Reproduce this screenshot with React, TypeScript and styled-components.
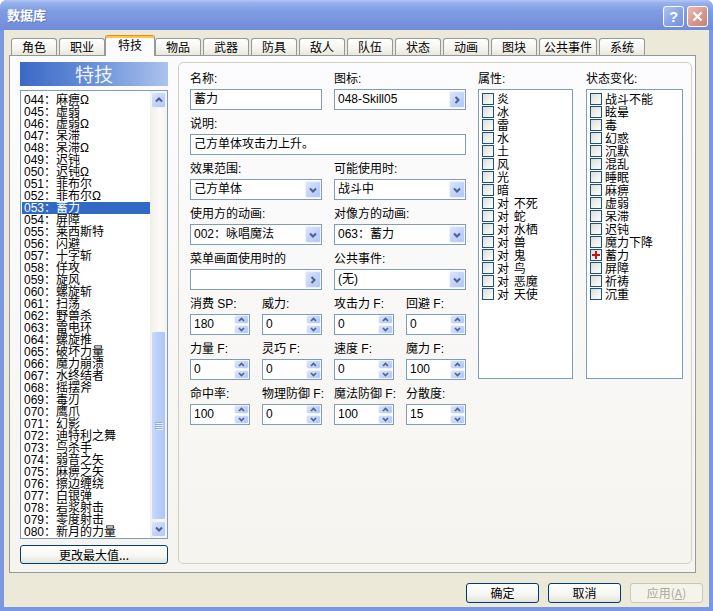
import React from "react";
import styled, { createGlobalStyle, css } from "styled-components";

const UI = `"Liberation Sans", "Noto Sans CJK SC", sans-serif`;
const CJK = `"Noto Sans CJK SC", "Liberation Sans", sans-serif`;

const GlobalStyle = createGlobalStyle`
  html, body { margin: 0; padding: 0; background: #ffffff; }
  body { font-family: ${UI}; font-size: 12px; color: #000; }
  *, *::before, *::after { box-sizing: border-box; }
`;

const Window = styled.div`
  width: 713px;
  height: 611px;
  display: flex;
  flex-direction: column;
  background: #7b97e0;
  border-radius: 7px 7px 0 0;
  overflow: hidden;
`;

const TitleBar = styled.div`
  height: 30px;
  flex: none;
  display: flex;
  align-items: center;
  padding: 0 5px 0 7px;
  background: linear-gradient(180deg, #b2c6f2 0%, #97b0ec 10%, #809ce3 35%, #7894df 70%, #6f8cdb 100%);
`;

const Title = styled.span`
  flex: 1;
  font-family: ${CJK};
  font-size: 13px;
  font-weight: bold;
  color: #ffffff;
  line-height: 30px;
  text-shadow: 1px 1px 0 rgba(40, 60, 140, 0.35);
`;

const TitleButtons = styled.div`
  display: flex;
  gap: 3px;
  margin-top: 2px;
`;

const TitleButton = styled.span<{ $close?: boolean }>`
  width: 21px;
  height: 21px;
  display: flex;
  align-items: center;
  justify-content: center;
  border: 1px solid #ffffff;
  border-radius: 3px;
  color: #ffffff;
  font-family: "Liberation Sans", sans-serif;
  font-weight: bold;
  font-size: 15px;
  background: ${(p) =>
    p.$close
      ? "linear-gradient(135deg, #eabcb2 0%, #d99a8f 50%, #c98074 100%)"
      : "linear-gradient(135deg, #aec4f4 0%, #8aa6ea 50%, #7090e0 100%)"};
`;

const Frame = styled.div`
  flex: 1;
  margin: 0 4px 4px 4px;
  background: #ece9d8;
  display: flex;
  flex-direction: column;
  padding: 5px 0 0 5px;
`;

const TabStrip = styled.div`
  height: 20px;
  display: flex;
  align-items: flex-end;
  gap: 2px;
  padding-left: 2px;
  position: relative;
  z-index: 2;
`;

const Tab = styled.div<{ $active?: boolean; $w: number }>`
  width: ${(p) => p.$w}px;
  height: 17px;
  flex: none;
  border: 1px solid #919b9c;
  border-bottom: none;
  border-radius: 3px 3px 0 0;
  background: linear-gradient(180deg, #ffffff 0%, #f6f5f0 55%, #e9e7dd 100%);
  font-family: ${CJK};
  font-size: 12px;
  line-height: 16px;
  text-align: center;
  white-space: nowrap;
  ${(p) =>
    p.$active &&
    css`
      width: ${p.$w + 4}px;
      height: 21px;
      margin: 0 -2px -1px -2px;
      line-height: 17px;
      border-top-color: #e68b2c;
      background: #fcfcfe;
      box-shadow: inset 0 2px 0 #ffc73c;
    `}
`;

const TabPanel = styled.div`
  width: 687px;
  height: 518px;
  border: 1px solid #919b9c;
  background: linear-gradient(180deg, #fcfcfe 0%, #f5f4ef 100%);
  display: flex;
  gap: 10px;
  padding: 6px 4px 8px 10px;
`;

const LeftColumn = styled.div`
  width: 148px;
  flex: none;
  display: flex;
  flex-direction: column;
`;

const ListHeader = styled.div`
  height: 24px;
  background: linear-gradient(90deg, #3a69c6 0%, #6a90d8 50%, #abc3ee 100%);
  color: #eef3fd;
  font-family: ${CJK};
  font-size: 19px;
  line-height: 24px;
  text-align: center;
`;

const SkillList = styled.div`
  height: 449px;
  margin-top: 4px;
  border: 1px solid #7f9db9;
  background: #ffffff;
  display: flex;
  overflow: hidden;
`;

const SkillRows = styled.div`
  flex: 1;
  padding: 3px 0 0 1px;
  display: flex;
  flex-direction: column;
  overflow: hidden;
`;

const SkillRow = styled.div<{ $selected?: boolean }>`
  height: 12px;
  flex: none;
  line-height: 12px;
  padding-left: 2px;
  white-space: nowrap;
  font-size: 12px;
  ${(p) =>
    p.$selected &&
    css`
      background: #316ac5;
      color: #ffffff;
    `}
`;

const ScrollTrack = styled.div`
  width: 17px;
  flex: none;
  display: flex;
  flex-direction: column;
  background: linear-gradient(90deg, #f1efe7 0%, #fbfbf8 60%, #f3f2ec 100%);
`;

const ScrollButton = styled.div`
  width: 15px;
  height: 16px;
  margin: 1px 1px;
  border: 1px solid #f0f4fd;
  border-radius: 2px;
  background: linear-gradient(135deg, #dbe5fd 0%, #c3d4fb 50%, #b2c7f5 100%);
  display: flex;
  align-items: center;
  justify-content: center;
`;

const ScrollSpace = styled.div`
  flex: 1;
`;

const ScrollThumb = styled.div`
  height: 189px;
  margin: 0 1px;
  border: 1px solid #f0f4fd;
  border-radius: 2px;
  background: linear-gradient(90deg, #c9d8fc 0%, #bacefa 50%, #b0c5f6 100%);
  display: flex;
  flex-direction: column;
  align-items: center;
  justify-content: center;
  gap: 1px;
`;

const Grip = styled.span`
  width: 7px;
  height: 1px;
  background: #8aa8ee;
  box-shadow: 1px 1px 0 #eef3fe;
`;

const PushButton = styled.div<{ $disabled?: boolean; $w?: number }>`
  height: ${(p) => (p.$w ? 20 : 19)}px;
  width: ${(p) => (p.$w ? `${p.$w}px` : "auto")};
  border: 1px solid ${(p) => (p.$disabled ? "#c9c7ba" : "#003c74")};
  border-radius: 3px;
  background: ${(p) =>
    p.$disabled ? "#f5f4ea" : "linear-gradient(180deg, #ffffff 0%, #f6f6f2 60%, #e3e2da 100%)"};
  color: ${(p) => (p.$disabled ? "#aca899" : "#000000")};
  font-family: ${CJK};
  font-size: 12px;
  line-height: 17px;
  text-align: center;
  white-space: nowrap;
`;

const MaxButton = styled(PushButton)`
  margin-top: 6px;
`;

const EditPanel = styled.div`
  flex: 1;
  border: 1px solid #d0d0bf;
  border-radius: 5px;
  padding: 6px 8px 0 11px;
  display: flex;
  gap: 12px;
  align-items: flex-start;
`;

const FormGrid = styled.div`
  width: 276px;
  flex: none;
  display: grid;
  grid-template-columns: repeat(4, 60px);
  column-gap: 12px;
  row-gap: 4px;
`;

const Field = styled.div<{ $span: number }>`
  grid-column: span ${(p) => p.$span};
  display: flex;
  flex-direction: column;
`;

const Label = styled.div`
  height: 20px;
  line-height: 20px;
  white-space: nowrap;
  font-size: 12px;
`;

const TextBox = styled.div`
  height: 21px;
  border: 1px solid #7f9db9;
  background: #ffffff;
  display: flex;
  align-items: center;
  padding-left: 3px;
`;

const BoxText = styled.span`
  flex: 1;
  line-height: 19px;
  white-space: nowrap;
  overflow: hidden;
`;

const ArrowButton = styled.span`
  width: 16px;
  height: 17px;
  flex: none;
  display: flex;
  align-items: center;
  justify-content: center;
  border: 1px solid #eef3fd;
  border-radius: 2px;
  background: linear-gradient(135deg, #dbe5fd 0%, #c3d4fb 50%, #b2c7f5 100%);
`;

const SpinBox = styled.div`
  height: 21px;
  border: 1px solid #7f9db9;
  background: #ffffff;
  display: flex;
`;

const SpinValue = styled.span`
  flex: 1;
  padding-left: 3px;
  line-height: 19px;
`;

const SpinButtons = styled.span`
  width: 15px;
  flex: none;
  display: flex;
  flex-direction: column;
  gap: 1px;
`;

const SpinButton = styled.span`
  height: 9px;
  display: flex;
  align-items: center;
  justify-content: center;
  border: 1px solid #eef3fd;
  border-radius: 2px;
  background: linear-gradient(135deg, #dbe5fd 0%, #c3d4fb 50%, #b2c7f5 100%);
`;

const CheckColumn = styled.div<{ $w: number; $ml?: number }>`
  width: ${(p) => p.$w}px;
  margin-left: ${(p) => p.$ml ?? 0}px;
  flex: none;
  display: flex;
  flex-direction: column;
`;

const CheckList = styled.div`
  height: 290px;
  border: 1px solid #7f9db9;
  background: #ffffff;
  padding: 2px 3px;
  display: flex;
  flex-direction: column;
`;

const CheckRow = styled.div`
  height: 13px;
  display: flex;
  align-items: center;
  gap: 3px;
`;

const CheckBox = styled.span`
  width: 12px;
  height: 12px;
  flex: none;
  border: 1px solid #1c5180;
  background: linear-gradient(135deg, #dcdcd7 0%, #eeeeea 50%, #ffffff 100%);
  display: flex;
  align-items: center;
  justify-content: center;
`;

const CheckText = styled.span`
  font-family: ${CJK};
  line-height: 13px;
  white-space: pre;
  word-spacing: 2px;
`;

const ButtonRow = styled.div`
  display: flex;
  justify-content: flex-end;
  gap: 9px;
  margin-top: 10px;
  padding-right: 6px;
`;

type Dir = "up" | "down" | "right";
const CHEVRON: Record<Dir, string> = {
  down: "M1 2.5 L4 5.5 L7 2.5",
  up: "M1 5.5 L4 2.5 L7 5.5",
  right: "M2.5 1 L5.5 4 L2.5 7",
};

const Chevron = ({ dir }: { dir: Dir }) => (
  <svg width="8" height="8" viewBox="0 0 8 8">
    <path d={CHEVRON[dir]} fill="none" stroke="#4d6185" strokeWidth="2" />
  </svg>
);

const MiniChevron = ({ dir }: { dir: "up" | "down" }) => (
  <svg width="7" height="5" viewBox="0 0 7 5">
    <path
      d={dir === "up" ? "M1 4 L3.5 1.5 L6 4" : "M1 1 L3.5 3.5 L6 1"}
      fill="none"
      stroke="#4d6185"
      strokeWidth="1.6"
    />
  </svg>
);

const RedPlus = () => (
  <svg width="10" height="10" viewBox="0 0 10 10">
    <rect x="4" y="1" width="2" height="8" fill="#c0141c" />
    <rect x="1" y="4" width="8" height="2" fill="#c0141c" />
  </svg>
);

const CloseGlyph = () => (
  <svg width="11" height="11" viewBox="0 0 11 11">
    <path d="M1.5 1.5 L9.5 9.5 M9.5 1.5 L1.5 9.5" stroke="#ffffff" strokeWidth="2.2" />
  </svg>
);

const TABS: { label: string; w: number }[] = [
  { label: "角色", w: 46 },
  { label: "职业", w: 46 },
  { label: "特技", w: 46 },
  { label: "物品", w: 46 },
  { label: "武器", w: 46 },
  { label: "防具", w: 46 },
  { label: "敌人", w: 46 },
  { label: "队伍", w: 46 },
  { label: "状态", w: 46 },
  { label: "动画", w: 46 },
  { label: "图块", w: 46 },
  { label: "公共事件", w: 58 },
  { label: "系统", w: 46 },
];

const SKILLS = [
  "麻痹Ω", "虚弱", "虚弱Ω", "呆滞", "呆滞Ω", "迟钝", "迟钝Ω", "菲布尔", "菲布尔Ω", "蓄力",
  "屏障", "莱西斯特", "闪避", "十字斩", "佯攻", "旋风", "螺旋斩", "扫荡", "野兽杀", "雷电环",
  "螺旋推", "破坏力量", "魔力崩溃", "水终结者", "摇摆斧", "毒刃", "鹰爪", "幻影", "迪特利之舞",
  "鸟杀手", "弱音之矢", "麻痹之矢", "擦边缠绕", "白银弹", "岩浆射击", "零度射击", "新月的力量",
];

const ATTRS = [
  "炎", "冰", "雷", "水", "土", "风", "光", "暗",
  "对 不死", "对 蛇", "对 水栖", "对 兽", "对 鬼", "对 鸟", "对 恶魔", "对 天使",
];

const STATES = [
  "战斗不能", "眩晕", "毒", "幻惑", "沉默", "混乱", "睡眠", "麻痹", "虚弱", "呆滞",
  "迟钝", "魔力下降", "蓄力", "屏障", "祈祷", "沉重",
];

const SPINS: { label: string; value: string }[] = [
  { label: "消费 SP:", value: "180" },
  { label: "威力:", value: "0" },
  { label: "攻击力 F:", value: "0" },
  { label: "回避 F:", value: "0" },
  { label: "力量 F:", value: "0" },
  { label: "灵巧 F:", value: "0" },
  { label: "速度 F:", value: "0" },
  { label: "魔力 F:", value: "100" },
  { label: "命中率:", value: "100" },
  { label: "物理防御 F:", value: "0" },
  { label: "魔法防御 F:", value: "100" },
  { label: "分散度:", value: "15" },
];

type BoxKind = "text" | "combo" | "pick";
const FIELDS: { label: string; value: string; span: number; kind: BoxKind }[] = [
  { label: "名称:", value: "蓄力", span: 2, kind: "text" },
  { label: "图标:", value: "048-Skill05", span: 2, kind: "pick" },
  { label: "说明:", value: "己方单体攻击力上升。", span: 4, kind: "text" },
  { label: "效果范围:", value: "己方单体", span: 2, kind: "combo" },
  { label: "可能使用时:", value: "战斗中", span: 2, kind: "combo" },
  { label: "使用方的动画:", value: "002：咏唱魔法", span: 2, kind: "combo" },
  { label: "对像方的动画:", value: "063：蓄力", span: 2, kind: "combo" },
  { label: "菜单画面使用时的", value: "", span: 2, kind: "pick" },
  { label: "公共事件:", value: "(无)", span: 2, kind: "combo" },
];

export default function App() {
  return (
    <>
      <GlobalStyle />
      <Window>
        <TitleBar>
          <Title>数据库</Title>
          <TitleButtons>
            <TitleButton>?</TitleButton>
            <TitleButton $close>
              <CloseGlyph />
            </TitleButton>
          </TitleButtons>
        </TitleBar>
        <Frame>
          <TabStrip>
            {TABS.map((t) => (
              <Tab key={t.label} $w={t.w} $active={t.label === "特技"}>
                {t.label}
              </Tab>
            ))}
          </TabStrip>
          <TabPanel>
            <LeftColumn>
              <ListHeader>特技</ListHeader>
              <SkillList>
                <SkillRows>
                  {SKILLS.map((name, i) => {
                    const num = String(44 + i).padStart(3, "0");
                    return (
                      <SkillRow key={num} $selected={num === "053"}>
                        {num}：{name}
                      </SkillRow>
                    );
                  })}
                </SkillRows>
                <ScrollTrack>
                  <ScrollButton>
                    <Chevron dir="up" />
                  </ScrollButton>
                  <ScrollSpace />
                  <ScrollThumb>
                    <Grip />
                    <Grip />
                    <Grip />
                    <Grip />
                  </ScrollThumb>
                  <ScrollButton>
                    <Chevron dir="down" />
                  </ScrollButton>
                </ScrollTrack>
              </SkillList>
              <MaxButton>更改最大值...</MaxButton>
            </LeftColumn>
            <EditPanel>
              <FormGrid>
                {FIELDS.map((f) => (
                  <Field key={f.label} $span={f.span}>
                    <Label>{f.label}</Label>
                    <TextBox>
                      <BoxText>{f.value}</BoxText>
                      {f.kind === "combo" && (
                        <ArrowButton>
                          <Chevron dir="down" />
                        </ArrowButton>
                      )}
                      {f.kind === "pick" && (
                        <ArrowButton>
                          <Chevron dir="right" />
                        </ArrowButton>
                      )}
                    </TextBox>
                  </Field>
                ))}
                {SPINS.map((s) => (
                  <Field key={s.label} $span={1}>
                    <Label>{s.label}</Label>
                    <SpinBox>
                      <SpinValue>{s.value}</SpinValue>
                      <SpinButtons>
                        <SpinButton>
                          <MiniChevron dir="up" />
                        </SpinButton>
                        <SpinButton>
                          <MiniChevron dir="down" />
                        </SpinButton>
                      </SpinButtons>
                    </SpinBox>
                  </Field>
                ))}
              </FormGrid>
              <CheckColumn $w={95}>
                <Label>属性:</Label>
                <CheckList>
                  {ATTRS.map((a) => (
                    <CheckRow key={a}>
                      <CheckBox />
                      <CheckText>{a}</CheckText>
                    </CheckRow>
                  ))}
                </CheckList>
              </CheckColumn>
              <CheckColumn $w={97} $ml={1}>
                <Label>状态变化:</Label>
                <CheckList>
                  {STATES.map((s, i) => (
                    <CheckRow key={s + i}>
                      <CheckBox>{s === "蓄力" && <RedPlus />}</CheckBox>
                      <CheckText>{s}</CheckText>
                    </CheckRow>
                  ))}
                </CheckList>
              </CheckColumn>
            </EditPanel>
          </TabPanel>
          <ButtonRow>
            <PushButton $w={73}>确定</PushButton>
            <PushButton $w={73}>取消</PushButton>
            <PushButton $w={73} $disabled>
              应用(<u>A</u>)
            </PushButton>
          </ButtonRow>
        </Frame>
      </Window>
    </>
  );
}
